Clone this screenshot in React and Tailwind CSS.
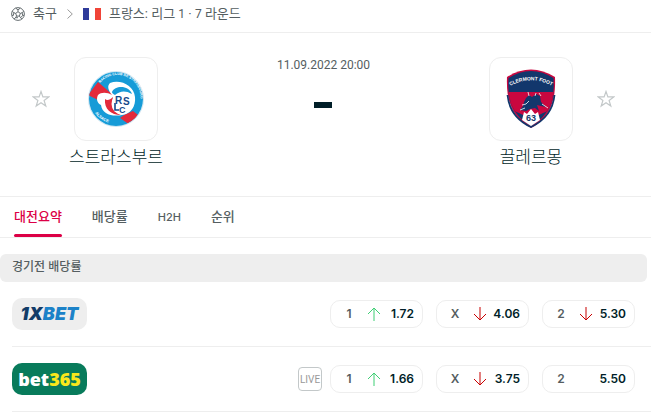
import { useState } from "react";

const tabs = ["대전요약", "배당률", "H2H", "순위"];

const bookmakers = [
  {
    name: "1XBET",
    logo: OneXBetLogo,
    live: false,
    odds: [
      { label: "1", value: "1.72", trend: "up" },
      { label: "X", value: "4.06", trend: "down" },
      { label: "2", value: "5.30", trend: "down" },
    ],
  },
  {
    name: "bet365",
    logo: Bet365Logo,
    live: true,
    odds: [
      { label: "1", value: "1.66", trend: "up" },
      { label: "X", value: "3.75", trend: "down" },
      { label: "2", value: "5.50", trend: null },
    ],
  },
];

export default function App() {
  const [activeTab, setActiveTab] = useState(tabs[0]);

  return (
    <main className="bg-white font-['Inter','Noto_Sans_CJK_KR',sans-serif] text-[#001e28]">
      <nav
        aria-label="breadcrumb"
        className="flex h-[33px] items-center border-b border-[#eeeeee] px-[11px] pb-1 font-['Roboto','Noto_Sans_CJK_KR',sans-serif] text-[13px] text-[#555e61]"
      >
        <BallIcon />
        <a href="#football" className="ml-2">
          축구
        </a>
        <svg viewBox="0 0 6 10" className="mx-[10px] h-[10px] w-[6px]" fill="none" stroke="#999999">
          <path d="M.5.5 5.3 5 .5 9.500" />
        </svg>
        <FranceFlag />
        <a href="#ligue-1" className="ml-2 whitespace-nowrap">
          프랑스: 리그 <span className="text-xs">1</span> · <span className="text-xs">7</span> 라운드
        </a>
      </nav>

      <header className="mr-1 flex h-[163px] items-start justify-between px-8 pt-6">
        <div className="flex gap-6">
          <FavoriteButton team="스트라스부르" />
          <Team name="스트라스부르" logo={<StrasbourgCrest />} />
        </div>

        <div className="flex flex-col items-center">
          <time className="font-['Roboto',sans-serif] text-xs text-[#555e61]">11.09.2022 20:00</time>
          <span className="mt-[29px] h-[6px] w-[18px] bg-[#001e28]" />
        </div>

        <div className="flex gap-6">
          <Team name="끌레르몽" logo={<ClermontCrest />} />
          <FavoriteButton team="끌레르몽" />
        </div>
      </header>

      <nav className="flex h-[42px] gap-[30px] border-y border-[#eeeeee] px-[14px] text-[13px]">
        {tabs.map((tab) => (
          <button
            key={tab}
            onClick={() => setActiveTab(tab)}
            className={`relative h-10 font-medium ${
              activeTab === tab ? "text-[#dc0046]" : "text-[#555e61]"
            } ${tab === "H2H" ? "text-[11px]" : ""}`}
          >
            {tab}
            {activeTab === tab && (
              <span className="absolute inset-x-0 bottom-0 h-[3px] rounded-xs bg-[#dc0046]" />
            )}
          </button>
        ))}
      </nav>

      <section className="mt-4">
        <h2 className="mr-1 flex h-7 items-center rounded-md bg-[#eeeeee] px-3 pb-[2px] text-xs font-medium text-[#555e61]">
          경기전 배당률
        </h2>
        {bookmakers.map((bookmaker) => (
          <BookmakerRow key={bookmaker.name} {...bookmaker} />
        ))}
      </section>
    </main>
  );
}

function FavoriteButton({ team }) {
  return (
    <button aria-label={team} className="flex h-[84px] items-center text-[#c3c8c9]">
      <svg viewBox="0 0 18 18" className="h-[18px] w-[18px]" fill="none" stroke="currentColor" strokeWidth="1.200">
        <path d="m9 1.500 1.900 5.400h5.800l-4.600 3.500 1.700 5.700L9 12.700l-4.800 3.400 1.700-5.700L1.300 6.900h5.800z" />
      </svg>
    </button>
  );
}

function Team({ name, logo }) {
  return (
    <div className="flex w-[84px] flex-col items-center">
      <div className="flex h-[84px] w-[84px] items-center justify-center rounded-xl border border-[#eeeeee]">
        {logo}
      </div>
      <a href="#team" className="mt-1 whitespace-nowrap text-[17px] font-light leading-6">
        {name}
      </a>
    </div>
  );
}

function BookmakerRow({ logo: Logo, live, odds }) {
  return (
    <div className="ml-3 flex h-[65px] items-center border-b border-[#eeeeee] pr-4">
      <Logo />
      {live && (
        <span className="ml-auto mr-2 flex h-6 w-6 items-center justify-center rounded-sm border border-[#c3c8c9] font-['Roboto',sans-serif] text-[10px] text-[#999999]">
          LIVE
        </span>
      )}
      <div className={`flex gap-[13px] ${live ? "" : "ml-auto"}`}>
        {odds.map((odd) => (
          <OddButton key={odd.label} {...odd} />
        ))}
      </div>
    </div>
  );
}

function OddButton({ label, value, trend }) {
  return (
    <button className="flex h-7 w-[93px] items-center rounded-[10px] border border-[#eeeeee] pl-3 pr-2 text-xs">
      <span className="w-3 font-semibold text-[#555e61]">{label}</span>
      {trend && <TrendArrow trend={trend} />}
      <span className="ml-auto font-semibold">{value}</span>
    </button>
  );
}

function TrendArrow({ trend }) {
  const up = trend === "up";
  return (
    <svg
      viewBox="0 0 14 14"
      className={`ml-3 h-[14px] w-[14px] ${up ? "text-[#3fcf75]" : "rotate-180 text-[#c80000]"}`}
      fill="none"
      stroke="currentColor"
    >
      <path d="M7 14V1M1 7l6-6 6 6" />
    </svg>
  );
}

function BallIcon() {
  return (
    <svg viewBox="0 0 14 14" className="h-[14px] w-[14px]" fill="none" stroke="#555e61" strokeWidth=".9">
      <circle cx="7" cy="7" r="6.400" />
      <path d="m7 4.700 2.300 1.700-.9 2.700H5.600l-.9-2.700zM7 4.700V2.800M9.300 6.400l1.800-.7M8.400 9.100l1.200 1.600M5.600 9.100l-1.200 1.600M4.700 6.400l-1.800-.7" />
      <path d="M4.700 1.200 7 2.800l2.300-1.600M12.700 4.300l-1.600 1.400.6 2.800 1.300-.2M10.900 12.100l-1.300-1.400 2.100-2.200M3.100 12.100l1.300-1.400h2.600M1 8.300l1.300.2.600-2.800-1.600-1.400" />
    </svg>
  );
}

function FranceFlag() {
  return (
    <svg viewBox="0 0 18 12" className="h-3 w-[18px]">
      <path fill="#2f3b9a" d="M0 0h6v12H0z" />
      <path fill="#ffffff" d="M6 0h6v12H6z" />
      <path fill="#f04438" d="M12 0h6v12h-6z" />
    </svg>
  );
}

function StrasbourgCrest() {
  return (
    <svg viewBox="0 0 56 56" className="h-14 w-14" role="img" aria-label="RC Strasbourg">
      <defs>
        <clipPath id="rcs-disc">
          <circle cx="28" cy="28" r="27" />
        </clipPath>
        <path id="rcs-top" d="M12 12A22 22 0 0 1 47 42" />
        <path id="rcs-bottom" d="M7 42A25 25 0 0 0 22 52" />
      </defs>
      <circle cx="28" cy="28" r="27.500" fill="#ffffff" stroke="#b9d9ea" strokeWidth=".7" />
      <g clipPath="url(#rcs-disc)">
        <path fill="#169bd7" d="M1 1h54v54H1z" />
        <path fill="#e32a3b" d="M0 24 10 11l15 13-5 10zM36 44l9-4 5 4-8 10-10-7z" />
      </g>
      <path fill="#ffffff" d="M24 24c-4-5-5-9-2-12 11-4 24 3 25 14 1 9-4 17-13 18-10 2-20-1-21-10-4-2-5-6-3-10 3-3 9-3 14 0z" />
      <path fill="#169bd7" d="M24 21c3-7 17-7 20 2-7-4-12-3-17 1-2-1-3-2-3-3z" />
      <path fill="#e32a3b" d="M17 28c2 2 5 1 8-2-2 8 0 15 8 18-10 0-17-6-16-16z" />
      <circle cx="34" cy="33" r="10.500" fill="#ffffff" />
      <path fill="none" stroke="#174a8b" strokeWidth="1.600" d="M27 32v7h4" />
      <g fill="#174a8b" className="font-['Liberation_Sans',sans-serif] font-bold">
        <text x="27" y="33" fontSize="10">R</text>
        <text x="35" y="34" fontSize="10">S</text>
        <text x="31" y="42" fontSize="9">C</text>
      </g>
      <g fill="#ffffff" className="font-['Liberation_Sans',sans-serif] font-bold">
        <text fontSize="3.500">
          <textPath href="#rcs-top">RACING CLUB DE STRASBOURG</textPath>
        </text>
        <text fontSize="4">
          <textPath href="#rcs-bottom">ALSACE</textPath>
        </text>
      </g>
    </svg>
  );
}

function ClermontCrest() {
  return (
    <svg viewBox="0 0 50 60" className="h-[60px] w-[50px]" role="img" aria-label="Clermont Foot 63">
      <defs>
        <clipPath id="cf-shield">
          <path d="M2.500 9C17-.2 33-.2 47.500 9c1.500 22-4 37-22.500 48C6.500 46 1 31 2.500 9z" />
        </clipPath>
        <path id="cf-arc" d="M3 17.500Q25 5 47 17.500" />
      </defs>
      <path fill="#c9073f" d="M1 8C17-2 33-2 49 8c1 24-5 40-24 51C6 48 0 32 1 8z" />
      <g clipPath="url(#cf-shield)">
        <path fill="#12376c" d="M0 0h50v60H0z" />
        <path fill="#c9073f" d="M0 23h50v16L37 44l-12 6-12-6L0 39z" />
      </g>
      <path fill="none" stroke="#12376c" strokeWidth="1.800" d="M1.500 26C3 41 10 51 25 58c15-7 22-17 23.500-32" />
      <path fill="#12376c" d="m20 29 3-3 3 2 4-3 4 2 1 6 5 5-5-1-4-1 2 6-4-3-5 1-4 2-6-1 3-4 1-4z" />
      <path fill="none" stroke="#ffffff" strokeWidth=".8" d="m22 23 1 4m7-3-1 3m4-3 2 3m1 8 6 4m-19-7-3 3-4 1m-2 5 5-2" />
      <path fill="#ffffff" d="m18 43 3 2 4-5 4 5 3-2 2 8-9 6-9-6z" />
      <text x="25" y="52" textAnchor="middle" fontSize="9" fill="#12376c" className="font-['Liberation_Sans',sans-serif] font-bold">
        63
      </text>
      <text fontSize="5" fill="#ffffff" textAnchor="middle" className="font-['Liberation_Sans',sans-serif] font-bold">
        <textPath href="#cf-arc" startOffset="50%">CLERMONT FOOT</textPath>
      </text>
    </svg>
  );
}

function OneXBetLogo() {
  return (
    <a
      href="#1xbet"
      className="flex h-8 w-[75px] items-center justify-center rounded-[10px] bg-[#eeeeee] font-['Inter',sans-serif] text-lg font-black italic text-[#1c82c8]"
    >
      <span className="text-[#123c68]">1X</span>BET
    </a>
  );
}

function Bet365Logo() {
  return (
    <a
      href="#bet365"
      className="flex h-8 w-[75px] items-center justify-center rounded-[10px] bg-[#087b5b] font-['Noto_Sans',sans-serif] text-lg font-black text-white"
    >
      bet<span className="text-[#f9e71b]">365</span>
    </a>
  );
}
